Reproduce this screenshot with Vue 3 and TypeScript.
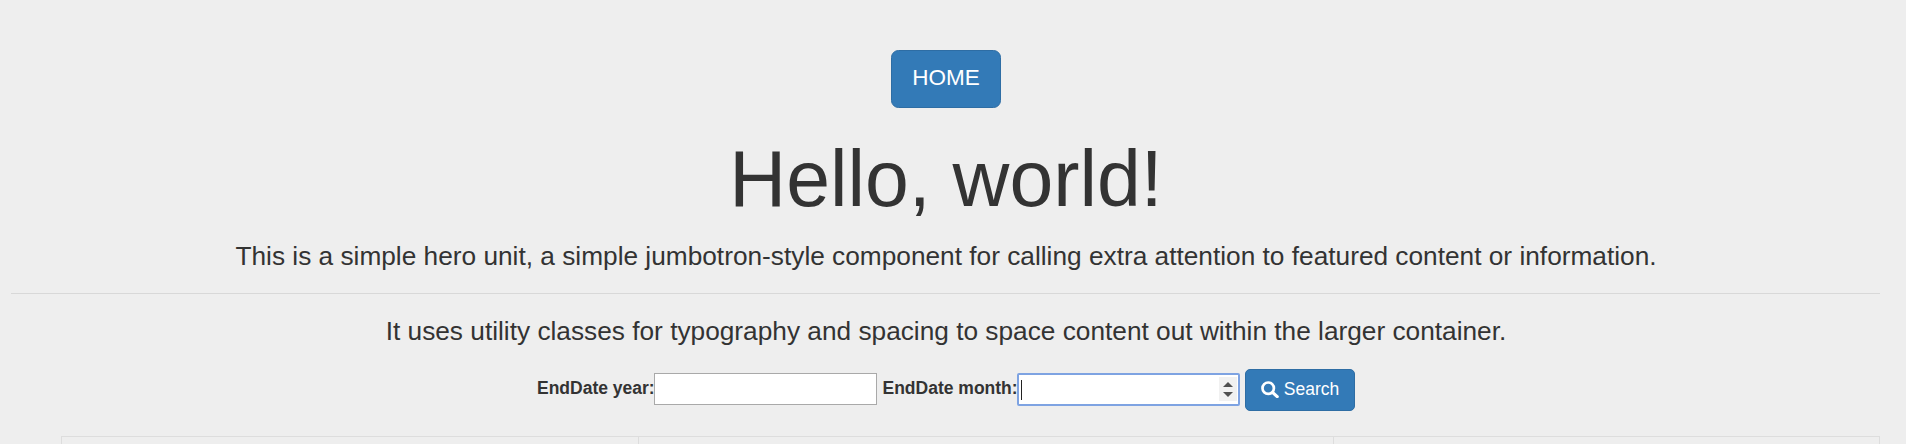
<script setup lang="ts">
const columns: string[] = ['col-a', 'col-b', 'col-c']
</script>

<template>
  <div class="page">
    <section class="hero">
      <a class="btn btn-lg" href="#">HOME</a>
      <h1>Hello, world!</h1>
      <p class="lead">This is a simple hero unit, a simple jumbotron-style component for calling extra attention to featured content or information.</p>
      <hr />
      <p class="sub">It uses utility classes for typography and spacing to space content out within the larger container.</p>
      <form class="search" @submit.prevent>
        <label class="first" for="year">EndDate year:</label>
        <input id="year" class="field" type="text" />
        <label class="second" for="month">EndDate month:</label>
        <div class="field focused">
          <span class="caret"></span>
          <span class="spin">
            <svg viewBox="0 0 10 5" width="10" height="5"><path d="M5 0 10 5H0z" fill="#505050" /></svg>
            <svg viewBox="0 0 10 5" width="10" height="5"><path d="M0 0H10L5 5z" fill="#505050" /></svg>
          </span>
        </div>
        <button class="btn btn-search" type="submit">
          <svg class="glass" viewBox="0 0 18 17" width="18" height="17">
            <circle cx="7.2" cy="7.2" r="5.7" fill="none" stroke="#fff" stroke-width="2.7" />
            <path d="M11.8 11.6 16.2 15.6" stroke="#fff" stroke-width="3.2" stroke-linecap="round" />
          </svg>
          <span>Search</span>
        </button>
      </form>
    </section>
    <div class="table">
      <div v-for="c in columns" :key="c" :class="['cell', c]"></div>
    </div>
  </div>
</template>

<style>
html, body { margin: 0; background: #eee; overflow: hidden; }
</style>

<style scoped>
.page {
  height: 444px;
  overflow: hidden;
  background: #eee;
  color: #333;
  font-family: "Liberation Sans", Arial, sans-serif;
  font-size: 17.5px;
  box-sizing: border-box;
  padding: 50px 26px 0 12px;
}
.hero { display: flex; flex-direction: column; align-items: center; }
.btn {
  box-sizing: border-box;
  display: inline-flex;
  align-items: center;
  justify-content: center;
  background: #337ab7;
  border: 1.25px solid #2e6da4;
  color: #fff;
  text-decoration: none;
  font-family: inherit;
}
.btn-lg { width: 110px; height: 58px; padding-bottom: 2px; font-size: 22.5px; border-radius: 7.5px; }
h1 {
  margin: 28px 0 0;
  font-size: 78.75px;
  line-height: 86px;
  font-weight: 400;
}
.lead { margin: 16px 0 0; font-size: 26.25px; line-height: 37px; }
hr {
  align-self: stretch;
  height: 1px;
  margin: 18px 0 0 -1px;
  border: 0;
  background: #d8d8d8;
}
.sub { margin: 19px 0 0; font-size: 26.25px; line-height: 37px; }
.search { display: flex; align-items: center; margin-top: 17px; align-self: flex-start; margin-left: 525px; }
label { font-weight: 700; line-height: 25px; padding-bottom: 2px; white-space: nowrap; flex: none; }
.first { width: 117px; }
.second { width: 134px; margin-left: 5.5px; }
.field {
  box-sizing: border-box;
  width: 223px;
  height: 32px;
  margin: 0;
  padding: 0;
  background: #fff;
  border: 1.25px solid #a9a9a9;
  border-radius: 0;
}
.focused {
  position: relative;
  display: flex;
  align-items: center;
  justify-content: flex-end;
  width: 223.5px;
  height: 33px;
  border: 2px solid #7ea3e2;
  border-radius: 2px;
  padding-right: 1px;
}
.caret { position: absolute; left: 2px; top: 5px; width: 1px; height: 20px; background: #222; }
.spin {
  display: flex;
  flex-direction: column;
  justify-content: center;
  align-items: center;
  gap: 5px;
  width: 18px;
  height: 24px;
  background: #f1f1f1;
}
.btn-search {
  width: 110px;
  height: 42px;
  margin: 2px 0 0 5px;
  padding-bottom: 2px;
  gap: 5px;
  font-size: 17.5px;
  border-radius: 5px;
}
.table {
  display: grid;
  grid-template-columns: 576px 695px 1fr;
  margin: 25px 0 0 49px;
  height: 40px;
  border: 1px solid #ddd;
}
.cell + .cell { border-left: 1px solid #ddd; }
</style>
